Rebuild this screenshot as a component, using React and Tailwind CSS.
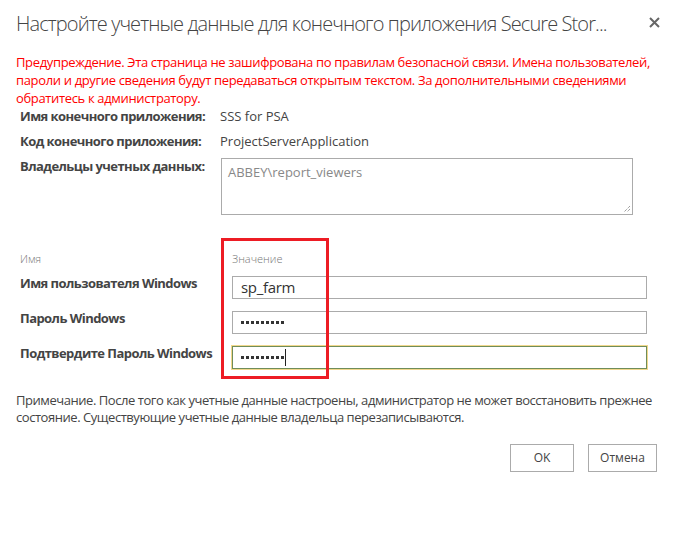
const font = "font-['Open_Sans','Noto_Sans',sans-serif]";

const Dots = ({ count = 9 }) => (
    <span className="flex items-center gap-[2px]">
        {Array.from({ length: count }).map((_, i) => (
            <span key={i} className="w-[3px] h-[3px] bg-[#333]" />
        ))}
    </span>
);

const InfoRow = ({ label, children }) => (
    <div className="grid grid-cols-[200px_1fr] items-start">
        <div className="text-[13px] leading-[18px] font-bold text-[#444] tracking-[-0.55px]">{label}</div>
        <div className="text-[13px] leading-[18px] text-[#444]">{children}</div>
    </div>
);

const CredRow = ({ label, children, focused }) => (
    <div className="grid grid-cols-[212px_415px] items-center">
        <div className="text-[13px] leading-[18px] font-bold text-[#444] tracking-[-0.55px] -mt-[10px]">{label}</div>
        <div
            className={`h-[23px] flex items-center px-2 bg-white border ${
                focused
                    ? "border-[#6f8d5a] shadow-[0_0_0_1px_#f1d88c]"
                    : "border-[#ababab]"
            }`}
        >
            {children}
        </div>
    </div>
);

export default function App() {
    return (
        <div className={`w-[681px] h-[549px] bg-white px-4 pt-[9px] ${font}`}>
            <div className="flex items-start justify-between">
                <h1 className="text-[20px] leading-[30px] font-light text-[#444] tracking-[-0.9px] whitespace-nowrap">
                    Настройте учетные данные для конечного приложения Secure Stor...
                </h1>
                <button className="mt-[4px] mr-[1px] p-1 text-[#666]">
                    <svg width="11" height="11" viewBox="0 0 11 11">
                        <path d="M1 1L10 10M10 1L1 10" stroke="currentColor" strokeWidth="2" />
                    </svg>
                </button>
            </div>

            <p className="mt-[14px] text-[13px] leading-[18px] text-[#ff0000] tracking-[-0.35px] whitespace-nowrap">
                Предупреждение. Эта страница не зашифрована по правилам безопасной связи. Имена пользователей,
                <br />
                пароли и другие сведения будут передаваться открытым текстом. За дополнительными сведениями
                <br />
                обратитесь к администратору.
            </p>

            <div className="ml-1 flex flex-col gap-[7px]">
                <InfoRow label="Имя конечного приложения:">SSS for PSA</InfoRow>
                <InfoRow label="Код конечного приложения:">ProjectServerApplication</InfoRow>
                <InfoRow label="Владельцы учетных данных:">
                    <div className="relative ml-px mt-px w-[412px] h-[57px] border border-[#ababab] px-[6px] py-[4px] text-[#888]">
                        ABBEY\report_viewers
                        {/* resize grip */}
                        <svg className="absolute right-[1px] bottom-[1px]" width="9" height="9" viewBox="0 0 9 9">
                            <path d="M8 2L2 8M8 5L5 8" stroke="#777" strokeWidth="1" strokeDasharray="1 1" />
                        </svg>
                    </div>
                </InfoRow>
            </div>

            <div className="relative ml-1 mt-[36px]">
                <div className="grid grid-cols-[212px_415px] text-[11px] leading-[16px] text-[#777] font-light">
                    <span>Имя</span>
                    <span>Значение</span>
                </div>
                <div className="mt-[9px] flex flex-col gap-[12px]">
                    <CredRow label="Имя пользователя Windows">
                        <span className="text-[15px] text-[#333] tracking-[-0.3px]">sp_farm</span>
                    </CredRow>
                    <CredRow label="Пароль Windows">
                        <Dots />
                    </CredRow>
                    <CredRow label="Подтвердите Пароль Windows" focused>
                        <Dots />
                        <span className="ml-[1px] w-px h-[17px] bg-[#222]" />
                    </CredRow>
                </div>
                {/* highlight annotation */}
                <div className="absolute left-[201px] top-[-13px] w-[108px] h-[141px] border-[3px] border-[#ed1c24] pointer-events-none" />
            </div>

            <p className="mt-[23px] text-[13px] leading-[17px] text-[#444] tracking-[-0.45px] whitespace-nowrap">
                Примечание. После того как учетные данные настроены, администратор не может восстановить прежнее
                <br />
                состояние. Существующие учетные данные владельца перезаписываются.
            </p>

            <div className="mt-[18px] flex justify-end gap-[14px] pr-[8px]">
                <button className="w-[64px] h-[28px] border border-[#ababab] text-[12px] text-[#444]">OK</button>
                <button className="w-[69px] h-[28px] border border-[#ababab] text-[12px] text-[#444]">Отмена</button>
            </div>
        </div>
    );
}
